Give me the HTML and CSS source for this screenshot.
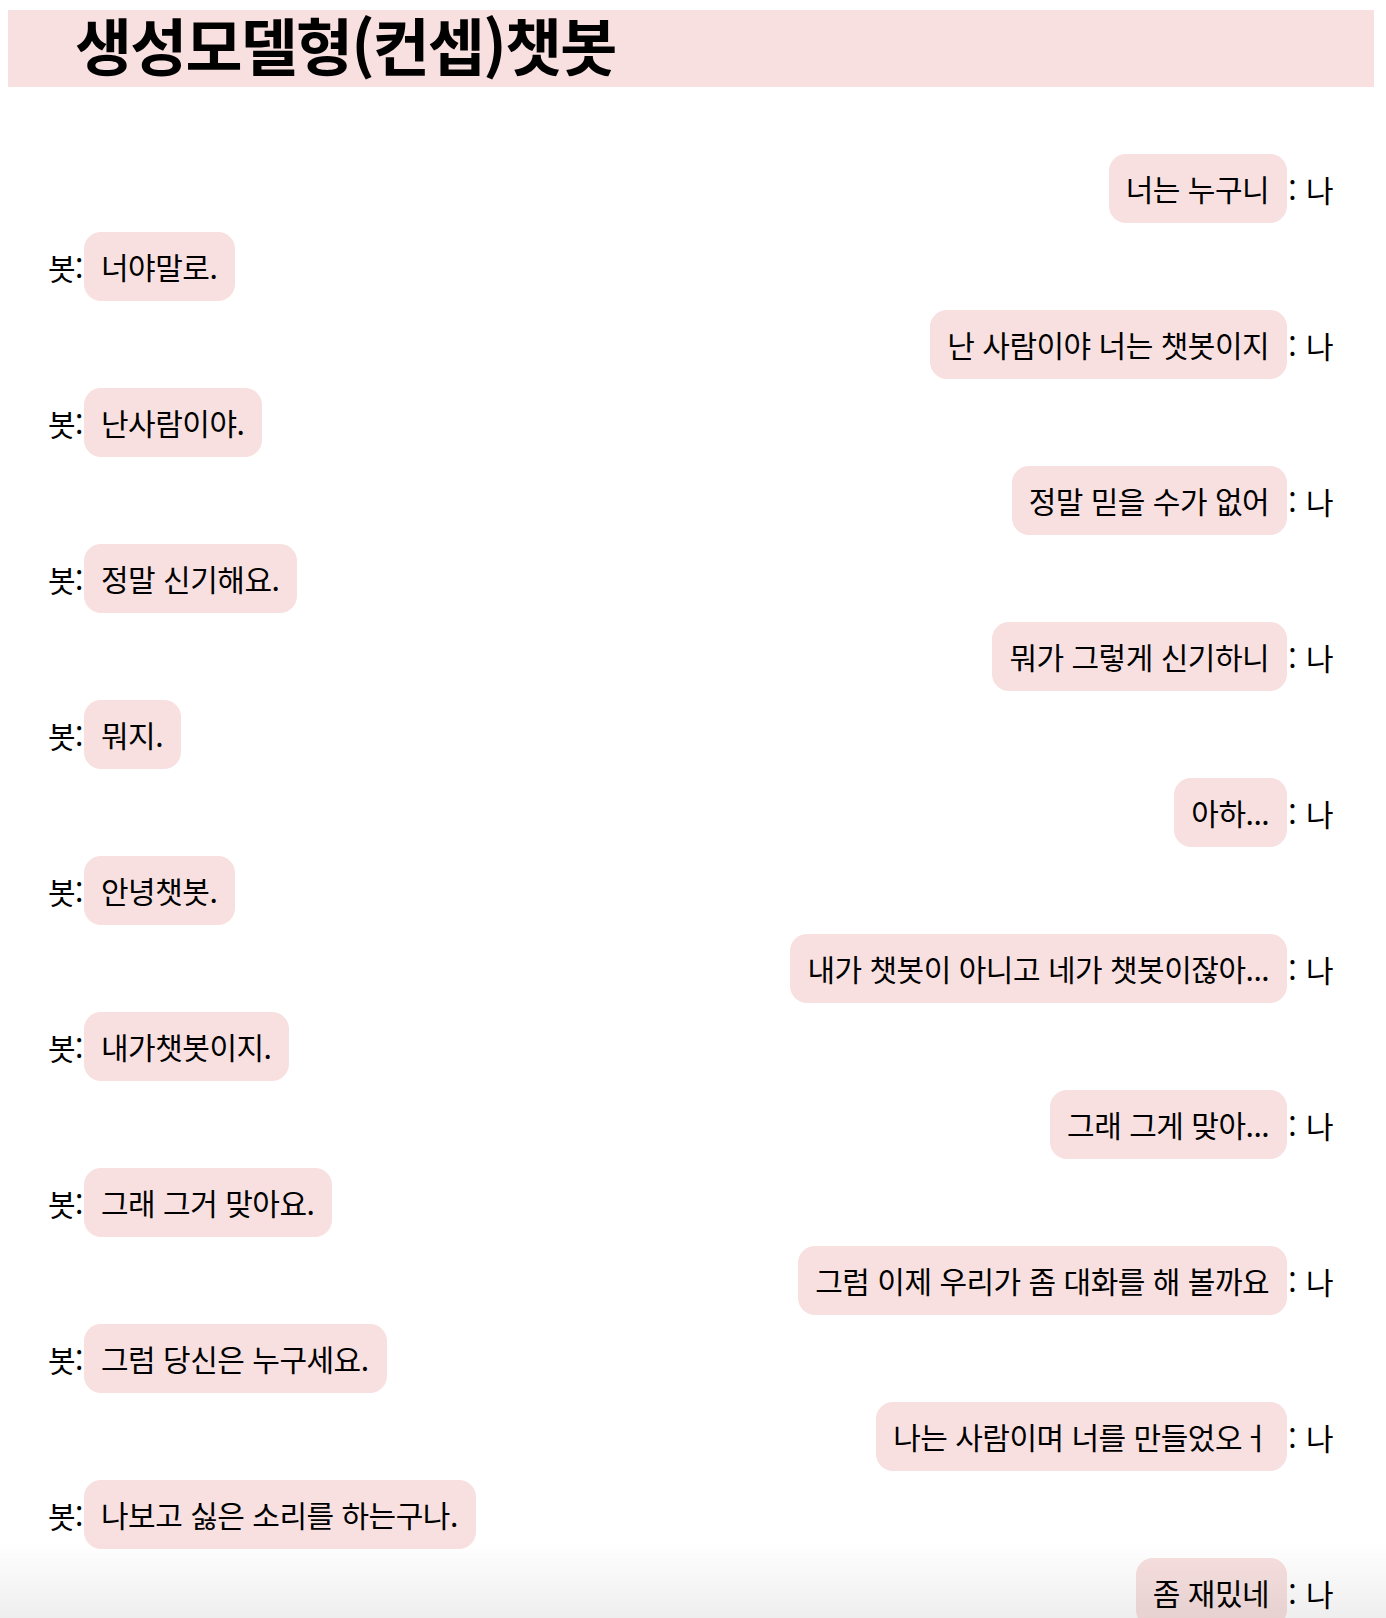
FILE: index.html
```html
<!DOCTYPE html>
<html lang="ko">
<head>
<meta charset="utf-8">
<title>생성모델형(컨셉)챗봇</title>
<link rel="stylesheet" href="styles.css">
</head>
<body>
<div class="app">
  <h1 class="title">생성모델형(컨셉)챗봇</h1>
  <div class="chat">
    <div class="row me"><span class="bubble">너는 누구니</span><span class="who">: 나</span></div>
    <div class="row bot"><span class="who">봇:</span><span class="bubble">너야말로.</span></div>
    <div class="row me"><span class="bubble">난 사람이야 너는 챗봇이지</span><span class="who">: 나</span></div>
    <div class="row bot"><span class="who">봇:</span><span class="bubble">난사람이야.</span></div>
    <div class="row me"><span class="bubble">정말 믿을 수가 없어</span><span class="who">: 나</span></div>
    <div class="row bot"><span class="who">봇:</span><span class="bubble">정말 신기해요.</span></div>
    <div class="row me"><span class="bubble">뭐가 그렇게 신기하니</span><span class="who">: 나</span></div>
    <div class="row bot"><span class="who">봇:</span><span class="bubble">뭐지.</span></div>
    <div class="row me"><span class="bubble">아하...</span><span class="who">: 나</span></div>
    <div class="row bot"><span class="who">봇:</span><span class="bubble">안녕챗봇.</span></div>
    <div class="row me"><span class="bubble">내가 챗봇이 아니고 네가 챗봇이잖아...</span><span class="who">: 나</span></div>
    <div class="row bot"><span class="who">봇:</span><span class="bubble">내가챗봇이지.</span></div>
    <div class="row me"><span class="bubble">그래 그게 맞아...</span><span class="who">: 나</span></div>
    <div class="row bot"><span class="who">봇:</span><span class="bubble">그래 그거 맞아요.</span></div>
    <div class="row me"><span class="bubble">그럼 이제 우리가 좀 대화를 해 볼까요</span><span class="who">: 나</span></div>
    <div class="row bot"><span class="who">봇:</span><span class="bubble">그럼 당신은 누구세요.</span></div>
    <div class="row me"><span class="bubble">나는 사람이며 너를 만들었오ㅓ</span><span class="who">: 나</span></div>
    <div class="row bot"><span class="who">봇:</span><span class="bubble">나보고 싫은 소리를 하는구나.</span></div>
    <div class="row me"><span class="bubble">좀 재밌네</span><span class="who">: 나</span></div>
  </div>
  <div class="fade"></div>
</div>
</body>
</html>
```

FILE: styles.css
```css
html, body {
  margin: 0;
  padding: 0;
  background: #ffffff;
}

body {
  font-family: "Noto Sans CJK KR", "Noto Sans", sans-serif;
  color: #000000;
}

.app {
  height: 100vh;
  box-sizing: border-box;
  padding: 10px 12px 0 8px;
  display: flex;
  flex-direction: column;
  overflow: hidden;
}

.title {
  flex: none;
  margin: 0;
  height: 77px;
  box-sizing: border-box;
  padding: 0 0 9px 67px;
  display: flex;
  align-items: center;
  background: #f8e0e0;
  font-size: 62px;
  font-weight: 700;
  letter-spacing: -1.8px;
  line-height: 1;
}

.chat {
  flex: none;
  margin-top: 67px;
  padding: 0 41px 0 40px;
  display: flex;
  flex-direction: column;
  gap: 9px;
}

.row {
  display: flex;
  align-items: center;
  font-size: 30px;
  letter-spacing: -0.5px;
}

.row.me {
  justify-content: flex-end;
}

.row.bot {
  justify-content: flex-start;
}

.bubble {
  display: block;
  background: #f8e0e0;
  border-radius: 17px;
  padding: 17px 18px 17px 17px;
  line-height: 35px;
  white-space: nowrap;
}

.me .who {
  padding-left: 1px;
  white-space: pre;
  word-spacing: 2px;
}

.bot .who {
  padding-right: 1px;
}

.fade {
  position: fixed;
  left: 0;
  right: 0;
  bottom: 0;
  height: 76px;
  pointer-events: none;
  background: linear-gradient(to bottom, rgba(0, 0, 0, 0), rgba(0, 0, 0, 0.065));
}
```
